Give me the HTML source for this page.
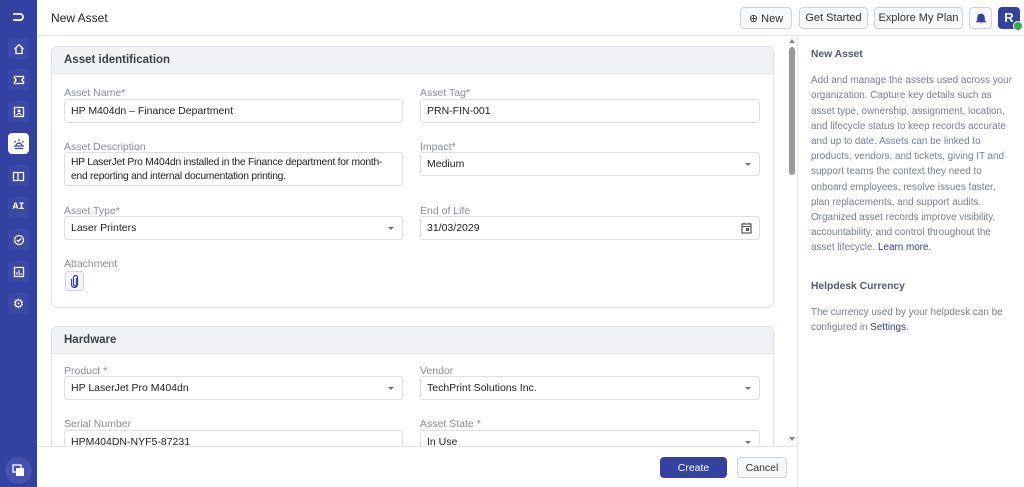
<!DOCTYPE html>
<html><head><style>
*{box-sizing:border-box;margin:0;padding:0}
body{width:1024px;height:487px;overflow:hidden;font-family:"Liberation Sans",sans-serif;background:#fff;position:relative;color:#333}
.a{position:absolute}
#side{left:0;top:0;width:37px;height:487px;background:#3341a0}
.si{position:absolute;left:8px;width:21px;height:21px;border-radius:4px;background:#3a48a8;color:#fff;font-size:10px;display:flex;align-items:center;justify-content:center}
#hdr{left:37px;top:0;width:987px;height:36px;border-bottom:1px solid #e3e5ea;background:#fff}
.btn{position:absolute;top:7px;height:22px;border:1px solid #cfd3da;border-radius:4px;background:#f7f8fa;font-size:11px;color:#333;display:flex;align-items:center;justify-content:center}
.card{position:absolute;left:51px;width:723px;border:1px solid #dfe2e7;border-radius:6px;background:#fff;overflow:hidden}
.ch{height:27px;background:#f1f2f5;border-bottom:1px solid #e6e8ec;font-size:11.5px;font-weight:bold;color:#3a3f4c;padding:7px 12px}
.lb{position:absolute;font-size:10.5px;color:#8a8d94}
.in{position:absolute;height:24px;border:1px solid #dcdfe4;border-radius:3px;background:#fff;font-size:10.5px;color:#222;padding:5px 6px;width:340px}
.car{position:absolute;right:8px;top:10px;border-left:3.5px solid transparent;border-right:3.5px solid transparent;border-top:3.5px solid #777}
#rp{left:797px;top:37px;width:227px;height:450px;border-left:1px solid #e3e5ea;background:#fff;padding:10px 11px 10px 13px;font-size:9.9px;line-height:15.2px;color:#7a7f8c}
#rp b{color:#555a6e;font-size:10.3px}
#rp a{color:#3341a0;text-decoration:none}
#foot{left:37px;top:446px;width:760px;height:41px;border-top:1px solid #e3e5ea;background:#fff}
</style></head><body>
<div id="side" class="a">
<div class="si" style="top:6px;background:none;font-size:16px;font-weight:bold">⊃</div>
<div class="si" style="top:38px"><svg width="12" height="12" viewBox="0 0 12 12"><path d="M1.5 6L6 1.8 10.5 6M3 5v5.5h6V5" fill="none" stroke="#fff" stroke-width="1.3"/></svg></div>
<div class="si" style="top:69px"><svg width="12" height="12"><path d="M1.5 2.5h9v2a1.5 1.5 0 0 0 0 3v2h-9v-2a1.5 1.5 0 0 0 0-3z" fill="none" stroke="#fff" stroke-width="1.3"/></svg></div>
<div class="si" style="top:101px"><svg width="12" height="12"><rect x="1.5" y="1.5" width="9" height="9" fill="none" stroke="#fff" stroke-width="1.3"/><circle cx="6" cy="5" r="1.5" fill="#fff"/><path d="M3.5 9q2.5-3 5 0" stroke="#fff" fill="none"/></svg></div>
<div class="si" style="top:133px;background:#fff;color:#3341a0"><svg width="14" height="12"><path d="M2 8h10M3 10.5h8M4 7q3-4 6 0M7 1v2M2.5 3l1.3 1.3M11.5 3l-1.3 1.3" stroke="#3341a0" fill="none" stroke-width="1.2"/></svg></div>
<div class="si" style="top:165px"><svg width="13" height="12"><path d="M1.5 2.5h4.5v8H1.5zM7 2.5h4.5v8H7" fill="none" stroke="#fff" stroke-width="1.3"/></svg></div>
<div class="si" style="top:197px;font-family:'Liberation Mono';font-weight:bold">AI</div>
<div class="si" style="top:229px"><svg width="12" height="12"><circle cx="6" cy="6" r="4.5" fill="none" stroke="#fff" stroke-width="1.3"/><path d="M3.8 6l1.5 1.5 3-3" stroke="#fff" fill="none" stroke-width="1.3"/></svg></div>
<div class="si" style="top:261px"><svg width="12" height="12"><rect x="1.5" y="1.5" width="9" height="9" fill="none" stroke="#fff" stroke-width="1.3"/><path d="M4 9V6M6 9V4M8 9V7" stroke="#fff"/></svg></div>
<div class="si" style="top:293px;font-size:13px">⚙</div>
<div class="a" style="left:5px;top:457px;width:27px;height:27px;border-radius:50%;background:#4552b0;display:flex;align-items:center;justify-content:center"><svg width="13" height="13"><rect x="1" y="1" width="8" height="7" fill="none" stroke="#fff" stroke-width="1.3"/><rect x="4" y="4" width="8" height="8" fill="#fff"/></svg></div>
</div>
<div id="hdr" class="a">
<div class="a" style="left:14px;top:11px;font-size:12px;color:#222">New Asset</div>
<div class="btn" style="left:703px;width:52px">⊕&nbsp;New</div>
<div class="btn" style="left:762px;width:69px">Get Started</div>
<div class="btn" style="left:837px;width:89px">Explore My Plan</div>
<div class="btn" style="left:932px;width:23px"><svg width="10" height="11"><path d="M5 1q3.5 0 3.5 4v3h1v1h-9V8h1V5Q1.5 1 5 1zM4 10h2" fill="#3341a0" stroke="#3341a0" stroke-width=".6"/></svg></div>
<div class="a" style="left:961px;top:7px;width:22px;height:22px;border-radius:4px;background:#3341a0;color:#fff;font-weight:bold;font-size:13px;text-align:center;line-height:22px">R</div>
<div class="a" style="left:976px;top:21px;width:10px;height:10px;border-radius:50%;background:#2eaa56;border:1px solid #fff"></div>
</div>
<div class="card" style="top:46px;height:262px">
<div class="ch">Asset identification</div>
</div>
<div class="lb" style="left:64px;top:87px">Asset Name*</div>
<div class="in" style="left:64px;top:99px;width:339px">HP M404dn – Finance Department</div>
<div class="lb" style="left:420px;top:87px">Asset Tag*</div>
<div class="in" style="left:420px;top:99px">PRN-FIN-001</div>
<div class="lb" style="left:64px;top:141px">Asset Description</div>
<div class="in" style="left:64px;top:152px;width:339px;height:34px;line-height:14px;padding-top:3px;letter-spacing:-0.25px;font-size:10.3px">HP LaserJet Pro M404dn installed in the Finance department for month-end reporting and internal documentation printing.</div>
<div class="lb" style="left:420px;top:141px">Impact*</div>
<div class="in" style="left:420px;top:152px">Medium<div class="car"></div></div>
<div class="lb" style="left:64px;top:205px">Asset Type*</div>
<div class="in" style="left:64px;top:216px;width:339px">Laser Printers<div class="car"></div></div>
<div class="lb" style="left:420px;top:205px">End of Life</div>
<div class="in" style="left:420px;top:216px">31/03/2029<svg class="a" style="right:7px;top:5px" width="11" height="12"><rect x="1" y="2" width="9" height="9" fill="none" stroke="#555" stroke-width="1.2"/><path d="M1 4.5h9M3 0.5v2M8 0.5v2" stroke="#555"/><rect x="5" y="6" width="3" height="3" fill="#555"/></svg></div>
<div class="lb" style="left:64px;top:258px">Attachment</div>
<div class="a" style="left:65px;top:271px;width:19px;height:20px;border:1px solid #cfd3da;border-radius:3px;background:#f4f5f8"><svg class="a" style="left:5px;top:3px" width="8" height="13"><path d="M5.5 3v6.5a1.5 1.5 0 0 1-3 0V2.5a2 2 0 0 1 4 0V9.5a3 3 0 0 1-6 0V4" fill="none" stroke="#3341a0" stroke-width="1.2"/></svg></div>
<div class="card" style="top:326px;height:140px">
<div class="ch">Hardware</div>
</div>
<div class="lb" style="left:64px;top:365px">Product *</div>
<div class="in" style="left:64px;top:376px;width:339px">HP LaserJet Pro M404dn<div class="car"></div></div>
<div class="lb" style="left:420px;top:365px">Vendor</div>
<div class="in" style="left:420px;top:376px">TechPrint Solutions Inc.<div class="car"></div></div>
<div class="lb" style="left:64px;top:418px">Serial Number</div>
<div class="in" style="left:64px;top:430px;width:339px">HPM404DN-NYF5-87231</div>
<div class="lb" style="left:420px;top:418px">Asset State *</div>
<div class="in" style="left:420px;top:430px">In Use<div class="car"></div></div>
<div class="a" style="left:787px;top:37px;width:10px;height:410px;background:#fff"></div>
<div class="a" style="left:789px;top:39px;border-left:3px solid transparent;border-right:3px solid transparent;border-bottom:4px solid #888"></div>
<div class="a" style="left:789px;top:47px;width:6px;height:128px;border-radius:3px;background:#9a9a9a"></div>
<div class="a" style="left:789px;top:437px;border-left:3px solid transparent;border-right:3px solid transparent;border-top:4px solid #888"></div>
<div id="foot" class="a">
<div class="a" style="left:623px;top:10px;width:67px;height:21px;border-radius:4px;background:#3341a0;color:#fff;font-size:10.5px;text-align:center;line-height:21px;padding-top:1px">Create</div>
<div class="a" style="left:700px;top:10px;width:50px;height:21px;border-radius:4px;border:1px solid #cfd3da;background:#f7f8fa;font-size:10.5px;text-align:center;line-height:20px;color:#333">Cancel</div>
</div>
<div id="rp" class="a">
<b>New Asset</b><br><div style="height:11px"></div>
Add and manage the assets used across your organization. Capture key details such as asset type, ownership, assignment, location, and lifecycle status to keep records accurate and up to date. Assets can be linked to products, vendors, and tickets, giving IT and support teams the context they need to onboard employees, resolve issues faster, plan replacements, and support audits. Organized asset records improve visibility, accountability, and control throughout the asset lifecycle. <a>Learn more.</a>
<div style="height:23px"></div>
<b>Helpdesk Currency</b><div style="height:11px"></div>
The currency used by your helpdesk can be configured in <a>Settings</a>.
</div>
</body></html>
